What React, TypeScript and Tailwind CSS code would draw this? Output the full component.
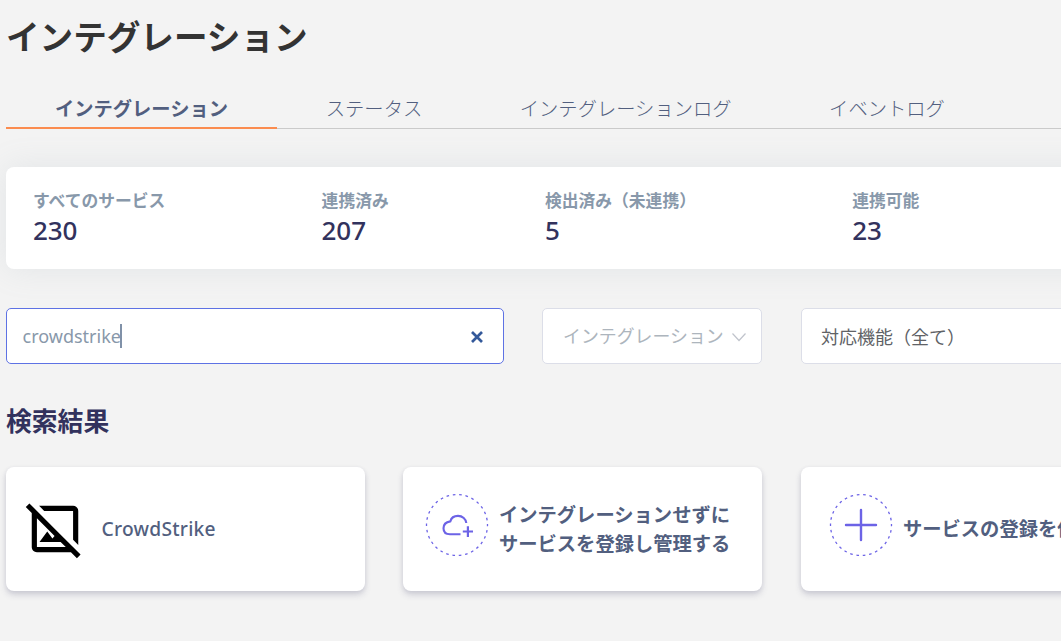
import type { ReactNode } from "react";

const tabs = ["インテグレーション", "ステータス", "インテグレーションログ", "イベントログ"];

const stats = [
  { label: "すべてのサービス", value: 230 },
  { label: "連携済み", value: 207 },
  { label: "検出済み（未連携）", value: 5 },
  { label: "連携可能", value: 23 },
];

function Card({ className, children }: { className: string; children: ReactNode }) {
  return (
    <div
      className={`flex h-[124px] w-[359px] shrink-0 items-center rounded-lg bg-white shadow-[0_4px_6px_rgba(50,50,93,0.17),0_1px_4px_rgba(50,50,93,0.08)] ${className}`}
    >
      {children}
    </div>
  );
}

function DashedCircle({ children }: { children: ReactNode }) {
  return (
    <svg className="-mt-2 size-[64px] shrink-0" viewBox="0 0 64 64" fill="none" stroke="#6c63e6">
      <circle cx="32" cy="32" r="30.5" strokeWidth="1.3" strokeDasharray="2.6 3.79" strokeDashoffset="1.3" />
      {children}
    </svg>
  );
}

export default function App() {
  return (
    <div className="h-[641px] w-full overflow-hidden bg-[#f3f3f3] pl-[6px] font-['Noto_Sans','Noto_Sans_CJK_JP',sans-serif] text-[#525f7f]">
      <h1 className="h-[89px] pt-[12px] text-[33.6px] leading-[50px] font-bold whitespace-nowrap text-[#333]">
        インテグレーション
      </h1>

      <nav className="flex h-[40px] border-b border-[#cacaca] text-[19.3px] leading-[40px] whitespace-nowrap">
        {tabs.map((tab, i) => (
          <div
            key={tab}
            className={
              i === 0
                ? "h-[40px] w-[271px] shrink-0 border-b-2 border-[#fb8c4f] text-center font-bold"
                : "shrink-0 px-[48.8px] font-light"
            }
          >
            {tab}
          </div>
        ))}
      </nav>

      <section className="mt-[38px] flex h-[102px] w-[1200px] gap-[156.2px] rounded-lg bg-white pt-[21px] pl-[27px] whitespace-nowrap shadow-[0_0_32px_rgba(136,152,170,0.15)]">
        {stats.map((s) => (
          <div key={s.label}>
            <div className="text-[16.8px] leading-[25px] font-bold text-[#8898aa]">{s.label}</div>
            <div className="text-[26px] leading-[34px] font-medium tracking-[-0.1px] text-[#32325d]">{s.value}</div>
          </div>
        ))}
      </section>

      <div className="mt-[39px] flex h-[56px] w-[1200px] text-[18px] whitespace-nowrap">
        <div className="flex w-[498px] items-center justify-between rounded-[5px] border border-[#5e72e4] bg-white pr-[20px] pl-[15.5px] text-[#8898aa]">
          <span className="flex items-center">
            crowdstrike
            <span className="-ml-px h-[24px] w-[2px] bg-[#8091a8]" />
          </span>
          <svg className="mt-[2px] size-[12px]" viewBox="0 0 12 12" stroke="#34599a" strokeWidth="2.7">
            <path d="M1 1L11 11M11 1L1 11" />
          </svg>
        </div>
        <div className="ml-[38px] flex w-[220px] items-center rounded-[5px] border border-[#dcdee8] bg-white pl-[20px] text-[17.9px] text-[#adb5bd]">
          インテグレーション
          <svg className="mt-[2px] ml-[8px] h-[10px] w-[14px]" viewBox="0 0 14 10" fill="none" stroke="#c0c4cc" strokeWidth="1.2">
            <path d="M.5 1.5L7 8.5L13.5 1.5" />
          </svg>
        </div>
        <div className="ml-[39px] flex w-[359px] items-center rounded-[5px] border border-[#dcdee8] bg-white pt-[2px] pl-[19px] text-[#606266]">
          対応機能（全て）
        </div>
      </div>

      <h2 className="mt-[38px] h-[65px] text-[25.8px] leading-[38px] font-bold text-[#32325d]">検索結果</h2>

      <div className="flex w-[1200px] gap-[38px] text-[19.3px] leading-[29px] font-bold whitespace-nowrap">
        <Card className="pl-[18px]">
          <svg className="-mt-px size-[62px]" viewBox="0 0 24 24" fill="#000">
            <path d="m21.9 21.9-8.49-8.49-9.93-9.92L2.1 2.1.69 3.51 3 5.83V19c0 1.1.9 2 2 2h13.17l2.31 2.31 1.42-1.41zM5 19V7.83l6.84 6.84-.84 1.05L9 13l-3 4h8.17l2 2H5zM7.83 5l-2-2H19c1.1 0 2 .9 2 2v13.17l-2-2V5H7.83z" />
          </svg>
          <span className="-mt-[2px] ml-[15.5px] text-[19.2px] font-medium tracking-[0.25px]">CrowdStrike</span>
        </Card>
        <Card className="pl-[22px]">
          <DashedCircle>
            <path
              d="M35.5 41.3H25C20.5 41.3 18.5 39 18.5 35.3C18.5 31.3 21.3 29 25.3 28.4C26.3 24.5 29.3 22.9 33 22.9C37.5 22.9 41 26 41.3 30"
              strokeWidth="2.1"
            />
            <path d="M37.8 38.5H48M42.9 33.3V44" strokeWidth="2.2" />
          </DashedCircle>
          <span className="ml-[10px]">
            インテグレーションせずに
            <br />
            サービスを登録し管理する
          </span>
        </Card>
        <Card className="ml-[1px] pl-[28px]">
          <DashedCircle>
            <path d="M17 32H47M32 17V47" strokeWidth="2.4" strokeLinecap="round" />
          </DashedCircle>
          <span className="-mt-px ml-[10px]">サービスの登録を依頼する</span>
        </Card>
      </div>
    </div>
  );
}
